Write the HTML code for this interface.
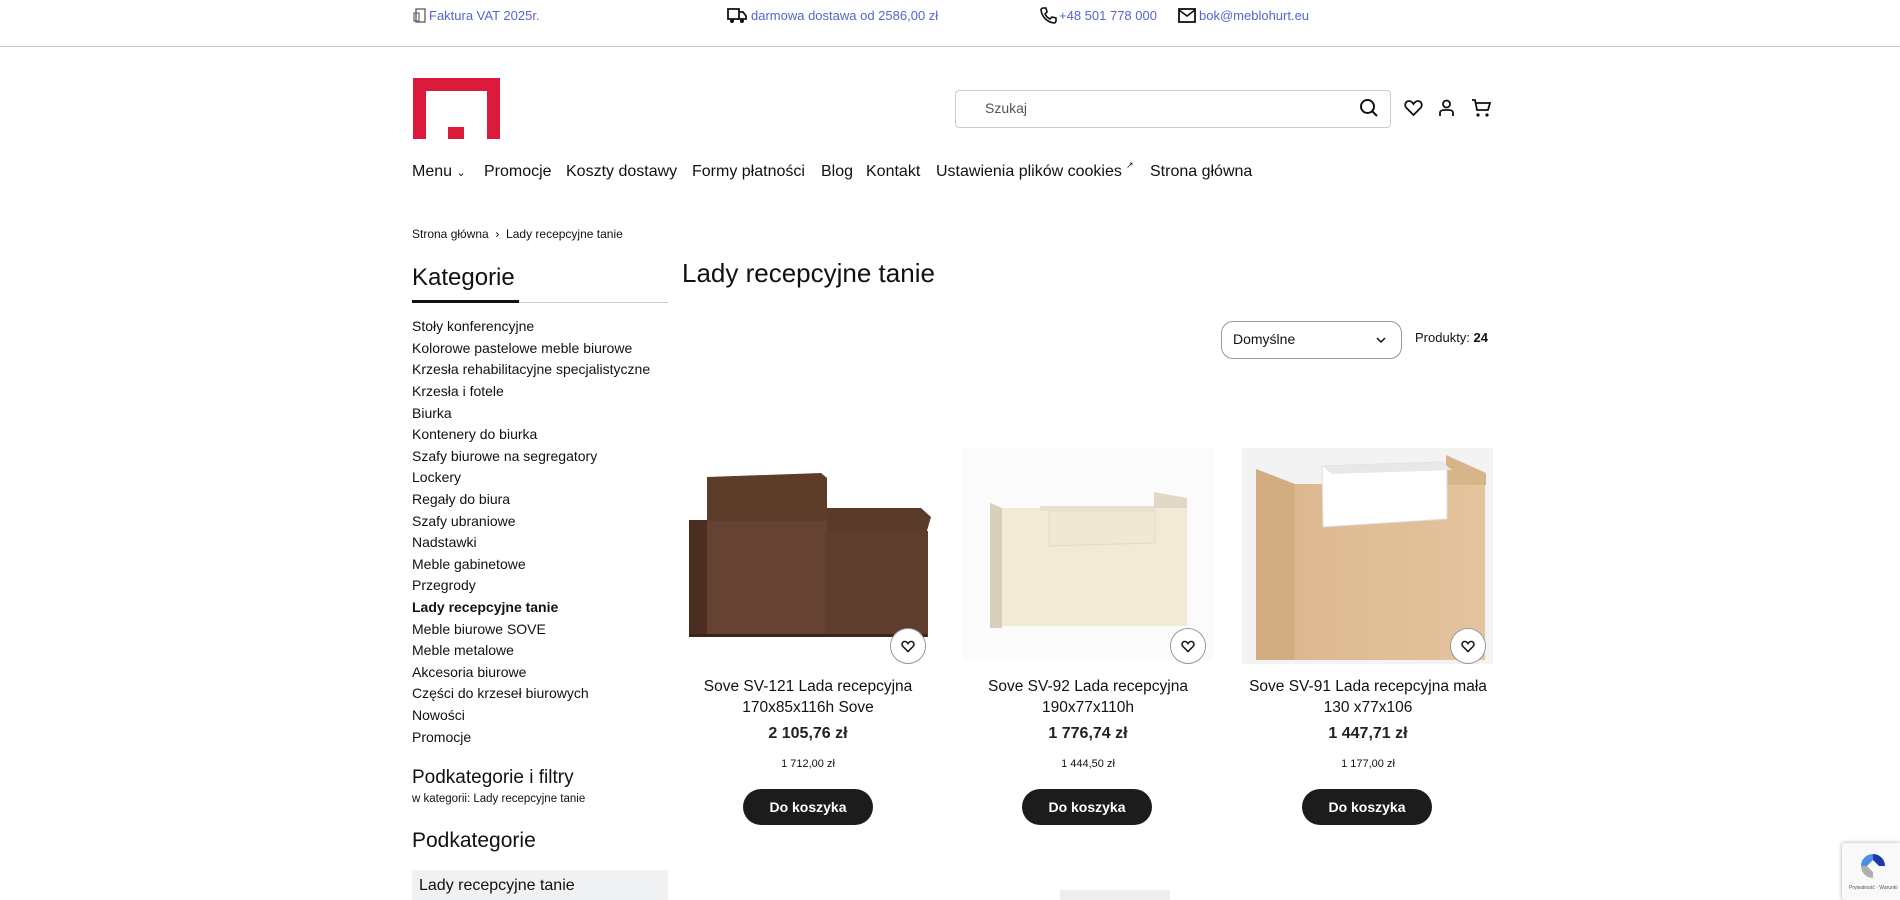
<!DOCTYPE html>
<html><head><meta charset="utf-8"><style>
*{margin:0;padding:0;box-sizing:border-box}
body{width:1900px;height:900px;overflow:hidden;background:#fff;font-family:"Liberation Sans",sans-serif;color:#111;position:relative}
.a{position:absolute;white-space:nowrap}
.top{font-size:13px;color:#5566d0;top:8px;line-height:15px}
.nav{top:162px;font-size:16px;line-height:20px}
.cat{left:412px;font-size:14px;line-height:18px}
.pn{font-size:15.5px;text-align:center;line-height:20.5px;width:260px}
.pr{font-size:16px;text-align:center;width:260px;font-weight:bold;color:#222}
.op{font-size:11px;text-align:center;width:260px}
.btn{width:130px;height:36px;border-radius:18px;background:#1c1c1c;color:#fff;font-weight:bold;font-size:14px;text-align:center;line-height:36px}
.hc{width:36px;height:36px;border-radius:50%;border:1px solid #999;background:#fff;display:flex;align-items:center;justify-content:center}
</style></head><body>
<svg class="a" style="left:413px;top:8px" width="14" height="15" viewBox="0 0 14 15"><rect x="3" y="1" width="9" height="13" fill="none" stroke="#666" stroke-width="1.4"/><rect x="1" y="5" width="5" height="8" fill="none" stroke="#666" stroke-width="1.2"/></svg>
<div class="a top" style="left:429px">Faktura VAT 2025r.</div>
<svg class="a" style="left:727px;top:7px" width="20" height="17" viewBox="0 0 20 17"><path d="M1 2h11v10H1z M12 5h4l3 4v3h-7z" fill="none" stroke="#111" stroke-width="1.8"/><circle cx="5" cy="14" r="2" fill="#111"/><circle cx="15" cy="14" r="2" fill="#111"/></svg>
<div class="a top" style="left:751px">darmowa dostawa od 2586,00 zł</div>
<svg class="a" style="left:1040px;top:7px" width="17" height="17" viewBox="0 0 17 17"><path d="M3 1l3 0 1 4-2 2c1 2 3 4 5 5l2-2 4 1v3c0 1-1 2-2 2C7 15 2 10 1 3c0-1 1-2 2-2z" fill="none" stroke="#111" stroke-width="1.6"/></svg>
<div class="a top" style="left:1059px">+48 501 778 000</div>
<svg class="a" style="left:1178px;top:8px" width="18" height="15" viewBox="0 0 18 15"><rect x="1" y="1" width="16" height="13" fill="none" stroke="#111" stroke-width="1.8"/><path d="M1 2l8 6 8-6" fill="none" stroke="#111" stroke-width="1.6"/></svg>
<div class="a top" style="left:1199px">bok@meblohurt.eu</div>
<div class="a" style="left:0;top:46px;width:1900px;height:1px;background:#c8c8c8"></div>
<svg class="a" style="left:413px;top:78px" width="87" height="61" viewBox="0 0 87 61"><path d="M0 0h87v61h-13V13H13v48H0z" fill="#dc1a3c"/><rect x="35" y="49" width="16" height="12" fill="#dc1a3c"/></svg>
<div class="a" style="left:955px;top:90px;width:436px;height:38px;border:1px solid #c9ccd4;border-radius:4px"></div>
<div class="a" style="left:985px;top:100px;font-size:14px;color:#555">Szukaj</div>
<svg class="a" style="left:1359px;top:98px" width="20" height="20" viewBox="0 0 20 20"><circle cx="8.5" cy="8.5" r="6.5" fill="none" stroke="#111" stroke-width="2"/><path d="M13 13l5 5" stroke="#111" stroke-width="2"/></svg>
<svg class="a" style="left:1404px;top:99px" width="19" height="18" viewBox="0 0 19 18"><path d="M9.5 16L2.5 9C0 6.5 1.5 2 5 2c2 0 3.5 1.5 4.5 3C10.5 3.5 12 2 14 2c3.5 0 5 4.5 2.5 7z" fill="none" stroke="#111" stroke-width="1.8"/></svg>
<svg class="a" style="left:1438px;top:99px" width="17" height="18" viewBox="0 0 17 18"><circle cx="8.5" cy="5" r="3.5" fill="none" stroke="#111" stroke-width="1.8"/><path d="M2 17v-3c0-2 2-3 4-3h5c2 0 4 1 4 3v3" fill="none" stroke="#111" stroke-width="1.8"/></svg>
<svg class="a" style="left:1471px;top:98px" width="20" height="20" viewBox="0 0 20 20"><path d="M1 2h3l2 10h11l2-7H5" fill="none" stroke="#111" stroke-width="1.8"/><circle cx="7" cy="17" r="1.6" fill="#111"/><circle cx="16" cy="17" r="1.6" fill="#111"/></svg>
<div class="a nav" style="left:412px">Menu <span style="font-size:11px">&#8964;</span></div>
<div class="a nav" style="left:484px">Promocje</div>
<div class="a nav" style="left:566px">Koszty dostawy</div>
<div class="a nav" style="left:692px">Formy płatności</div>
<div class="a nav" style="left:821px">Blog</div>
<div class="a nav" style="left:866px">Kontakt</div>
<div class="a nav" style="left:936px">Ustawienia plików cookies</div>
<div class="a" style="left:1126px;top:160px;font-size:9px">&#8599;</div>
<div class="a nav" style="left:1150px">Strona główna</div>
<div class="a" style="left:412px;top:227px;font-size:12px">Strona główna &nbsp;›&nbsp; Lady recepcyjne tanie</div>
<div class="a" style="left:412px;top:264px;font-size:24px">Kategorie</div>
<div class="a" style="left:412px;top:302px;width:256px;height:1px;background:#ccc"></div>
<div class="a" style="left:412px;top:300px;width:107px;height:3px;background:#111"></div>
<div class="a cat" style="top:317px">Stoły konferencyjne</div>
<div class="a cat" style="top:339px">Kolorowe pastelowe meble biurowe</div>
<div class="a cat" style="top:360px">Krzesła rehabilitacyjne specjalistyczne</div>
<div class="a cat" style="top:382px">Krzesła i fotele</div>
<div class="a cat" style="top:404px">Biurka</div>
<div class="a cat" style="top:425px">Kontenery do biurka</div>
<div class="a cat" style="top:447px">Szafy biurowe na segregatory</div>
<div class="a cat" style="top:468px">Lockery</div>
<div class="a cat" style="top:490px">Regały do biura</div>
<div class="a cat" style="top:512px">Szafy ubraniowe</div>
<div class="a cat" style="top:533px">Nadstawki</div>
<div class="a cat" style="top:555px">Meble gabinetowe</div>
<div class="a cat" style="top:576px">Przegrody</div>
<div class="a cat" style="top:598px;font-weight:bold">Lady recepcyjne tanie</div>
<div class="a cat" style="top:620px">Meble biurowe SOVE</div>
<div class="a cat" style="top:641px">Meble metalowe</div>
<div class="a cat" style="top:663px">Akcesoria biurowe</div>
<div class="a cat" style="top:684px">Części do krzeseł biurowych</div>
<div class="a cat" style="top:706px">Nowości</div>
<div class="a cat" style="top:728px">Promocje</div>
<div class="a" style="left:412px;top:767px;font-size:19px">Podkategorie i filtry</div>
<div class="a" style="left:412px;top:793px;font-size:11.5px">w kategorii: Lady recepcyjne tanie</div>
<div class="a" style="left:412px;top:829px;font-size:21px">Podkategorie</div>
<div class="a" style="left:412px;top:870px;width:256px;height:30px;background:#f0f1f3"></div>
<div class="a" style="left:419px;top:877px;font-size:16px">Lady recepcyjne tanie</div>
<div class="a" style="left:682px;top:258px;font-size:26px">Lady recepcyjne tanie</div>
<div class="a" style="left:1221px;top:321px;width:181px;height:38px;border:1px solid #999;border-radius:12px"></div>
<div class="a" style="left:1233px;top:331px;font-size:14px">Domyślne</div>
<svg class="a" style="left:1376px;top:336px" width="10" height="8" viewBox="0 0 10 8"><path d="M1 2l4 4 4-4" fill="none" stroke="#111" stroke-width="1.5"/></svg>
<div class="a" style="left:1415px;top:330px;font-size:13px">Produkty: <b>24</b></div>
<svg class="a" style="left:682px;top:440px" width="812" height="230" viewBox="682 440 812 230">
 <defs><linearGradient id="g3" x1="0" x2="1"><stop offset="0" stop-color="#dcb890"/><stop offset="1" stop-color="#e4c49e"/></linearGradient></defs>
 <path d="M707 477l114-4 6 5v159h-120z" fill="#5e3c2a"/>
 <path d="M689 520h18v117h-18z" fill="#4a2e20"/>
 <path d="M707 521h120v116h-120z" fill="#654231"/>
 <path d="M827 508l94 0 10 9-5 17h-99z" fill="#5a3a29"/>
 <path d="M825 531h103v106h-103z" fill="#5e3d2c"/>
 <path d="M689 634h238v3h-238z" fill="#3d2519"/>
 <rect x="962" y="448" width="251" height="212" fill="#fbfbfb"/>
 <path d="M990 503l12 5v120h-12z" fill="#d8cfba"/>
 <path d="M1002 508h185v118h-185z" fill="#f2ead7"/>
 <path d="M1154 492l33 6v10h-33z" fill="#e0d8c4"/>
 <path d="M1040 506h114v5h-114z" fill="#e9e1cc"/>
 <path d="M1049 511h106v32l-106 3z" fill="#f0e8d3" stroke="#e2dac6" stroke-width="1"/>
 <rect x="1242" y="448" width="251" height="216" fill="#f3f3f3"/>
 <path d="M1256 469l39 15v176h-39z" fill="#d2ad82"/>
 <path d="M1295 484h190v176h-190z" fill="url(#g3)"/>
 <path d="M1446 455l40 18v12h-40z" fill="#d7b48a"/>
 <path d="M1322 466l120-4 5 5v52l-124 8z" fill="#fff" stroke="#ddd"/>
 <path d="M1322 466l120-4 10 8-120 4z" fill="#e8e8e8"/>
</svg>
<div class="a hc" style="left:890px;top:628px"><svg width="14" height="13" viewBox="0 0 19 18"><path d="M9.5 16L2.5 9C0 6.5 1.5 2 5 2c2 0 3.5 1.5 4.5 3C10.5 3.5 12 2 14 2c3.5 0 5 4.5 2.5 7z" fill="none" stroke="#111" stroke-width="2"/></svg></div>
<div class="a hc" style="left:1170px;top:628px"><svg width="14" height="13" viewBox="0 0 19 18"><path d="M9.5 16L2.5 9C0 6.5 1.5 2 5 2c2 0 3.5 1.5 4.5 3C10.5 3.5 12 2 14 2c3.5 0 5 4.5 2.5 7z" fill="none" stroke="#111" stroke-width="2"/></svg></div>
<div class="a hc" style="left:1450px;top:628px"><svg width="14" height="13" viewBox="0 0 19 18"><path d="M9.5 16L2.5 9C0 6.5 1.5 2 5 2c2 0 3.5 1.5 4.5 3C10.5 3.5 12 2 14 2c3.5 0 5 4.5 2.5 7z" fill="none" stroke="#111" stroke-width="2"/></svg></div>
<div class="a pn" style="left:678px;top:677px">Sove SV-121 Lada recepcyjna<br>170x85x116h Sove</div>
<div class="a pn" style="left:958px;top:677px">Sove SV-92 Lada recepcyjna<br>190x77x110h</div>
<div class="a pn" style="left:1238px;top:677px">Sove SV-91 Lada recepcyjna mała<br>130 x77x106</div>
<div class="a pr" style="left:678px;top:725px">2 105,76 zł</div>
<div class="a pr" style="left:958px;top:725px">1 776,74 zł</div>
<div class="a pr" style="left:1238px;top:725px">1 447,71 zł</div>
<div class="a op" style="left:678px;top:758px">1 712,00 zł</div>
<div class="a op" style="left:958px;top:758px">1 444,50 zł</div>
<div class="a op" style="left:1238px;top:758px">1 177,00 zł</div>
<div class="a btn" style="left:743px;top:789px">Do koszyka</div>
<div class="a btn" style="left:1022px;top:789px">Do koszyka</div>
<div class="a btn" style="left:1302px;top:789px">Do koszyka</div>
<div class="a" style="left:1060px;top:890px;width:110px;height:10px;background:#eee"></div>
<div class="a" style="left:1842px;top:843px;width:58px;height:57px;background:#f9f9f9;box-shadow:0 0 4px #aaa;border-radius:3px 0 0 3px"></div>
<svg class="a" style="left:1857px;top:850px" width="32" height="32" viewBox="0 0 32 32"><path d="M16 4a12 12 0 0 1 12 12h-6l-6-6z" fill="#1c3aa9"/><path d="M4 16A12 12 0 0 1 16 4v6l-6 6z" fill="#4a90e2"/><path d="M4 16h6l6 6 0 6A12 12 0 0 1 4 16z" fill="#b0b0b0"/></svg>
<div class="a" style="left:1849px;top:885px;font-size:5px;color:#555">Prywatność · Warunki</div>
</body></html>
